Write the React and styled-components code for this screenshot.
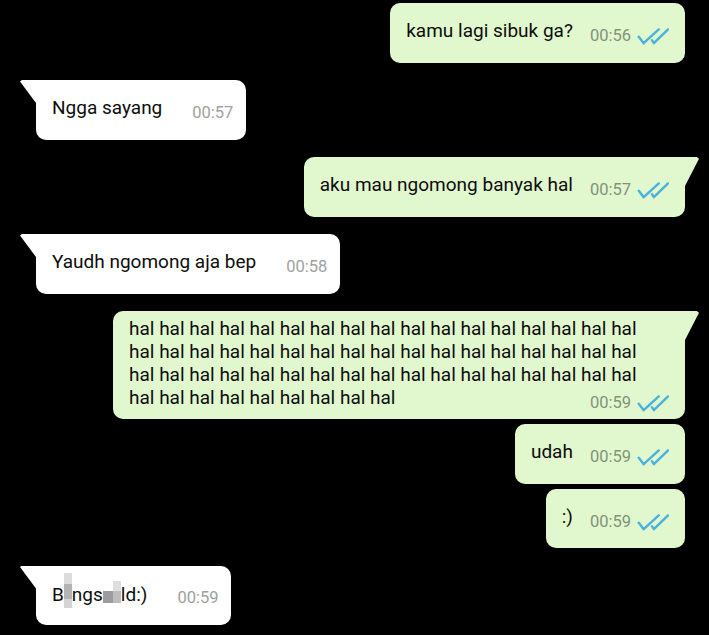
import React from 'react';
import styled, { createGlobalStyle, css } from 'styled-components';

const GlobalStyle = createGlobalStyle`
  html, body {
    margin: 0;
    background: #000;
  }
  body {
    font-family: Roboto, 'Noto Sans', sans-serif;
    width: 709px;
    height: 635px;
    overflow: hidden;
  }
`;

const Chat = styled.div`
  display: flex;
  flex-direction: column;
  padding: 3px 24px 0 36px;
`;

const Bubble = styled.div`
  position: relative;
  display: flex;
  align-items: center;
  box-sizing: border-box;
  min-height: 59.5px;
  max-width: 572px;
  margin-top: ${({ $gap }) => $gap}px;
  padding: ${({ $out }) => ($out ? '6px 30px 8px 16px' : '6px 13px 8px 16px')};
  border-radius: 10px;
  align-self: ${({ $out }) => ($out ? 'flex-end' : 'flex-start')};
  background: ${({ $out }) => ($out ? '#e1f7cd' : '#fff')};
  color: #0d0d0d;

  ${({ $tail, $out }) =>
    $tail &&
    $out &&
    css`
      border-top-right-radius: 0;
      &::before {
        content: '';
        position: absolute;
        top: 0;
        right: -14px;
        width: 14px;
        height: 29px;
        background: #e1f7cd;
        clip-path: polygon(0 0, 85% 0, 100% 6%, 0 100%);
      }
    `}

  ${({ $tail, $out }) =>
    $tail &&
    !$out &&
    css`
      border-top-left-radius: 0;
      &::before {
        content: '';
        position: absolute;
        top: 0;
        left: -16px;
        width: 16px;
        height: 23px;
        background: #fff;
        clip-path: polygon(0 6%, 12% 0, 100% 0, 100% 100%);
      }
    `}
`;

const Content = styled.div`
  display: flow-root;
  font-size: 19px;
  line-height: 23px;
`;

const Meta = styled.span`
  float: right;
  display: flex;
  align-items: flex-start;
  gap: 6px;
  height: 16px;
  margin: ${({ $out }) => ($out ? '9px -14px 0 17px' : '9px 0 0 30px')};
`;

const Time = styled.span`
  font-size: 16.5px;
  line-height: 16px;
  color: ${({ $out }) => ($out ? '#82937a' : '#a0a0a0')};
`;

const Censor = styled.span`
  display: inline-block;
  vertical-align: ${({ $tall }) => ($tall ? '-7px' : '-2px')};
  width: ${({ $w }) => $w}px;
  height: ${({ $tall }) => ($tall ? '35px' : '22px')};
  margin-top: ${({ $tall }) => ($tall ? '-12px' : '0')};
  background: ${({ $tall }) =>
    $tall
      ? 'linear-gradient(#dcdcdc 0 32%, #b3b3b3 32% 74%, #d4d4d4 74%)'
      : 'linear-gradient(to right, transparent 55%, #dedede 55%) top / 100% 45% no-repeat, linear-gradient(to right, #9c9c9c 55%, #bdbdbd 55%) bottom / 100% 55% no-repeat'};
`;

const Ticks = () => (
  <svg width="32" height="17" viewBox="0 0 33 17" fill="none">
    <path
      d="M1.8 8.8 L6.9 15.4 L22.4 1.2 M15.4 12.3 L17.4 15.4 L32 1.2"
      stroke="#4bb2dd"
      strokeWidth="2.5"
      strokeLinecap="round"
      strokeLinejoin="round"
    />
  </svg>
);

const Message = ({ out, tail, gap, time, children }) => (
  <Bubble $out={out} $tail={tail} $gap={gap}>
    <Content>
      {children}
      <Meta $out={out}>
        <Time $out={out}>{time}</Time>
        {out && <Ticks />}
      </Meta>
    </Content>
  </Bubble>
);

const manyHal = Array(60).fill('hal').join(' ');

export default function App() {
  return (
    <>
      <GlobalStyle />
      <Chat>
        <Message out gap={0} time="00:56">
          kamu lagi sibuk ga?
        </Message>
        <Message tail gap={17.5} time="00:57">
          Ngga sayang
        </Message>
        <Message out tail gap={17.5} time="00:57">
          aku mau ngomong banyak hal
        </Message>
        <Message tail gap={17.5} time="00:58">
          Yaudh ngomong aja bep
        </Message>
        <Message out tail gap={17.5} time="00:59">
          {manyHal}
        </Message>
        <Message out gap={5} time="00:59">
          udah
        </Message>
        <Message out gap={5} time="00:59">
          :)
        </Message>
        <Message tail gap={17.5} time="00:59">
          B<Censor $tall $w={8} />ngs<Censor $w={18} />ld:)
        </Message>
      </Chat>
    </>
  );
}
